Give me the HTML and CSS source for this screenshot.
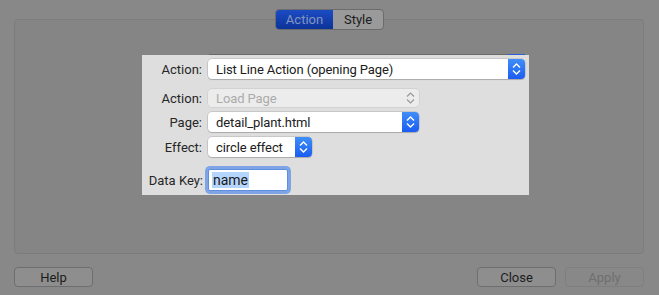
FILE: index.html
```html
<!DOCTYPE html>
<html lang="en">
<head>
  <meta charset="UTF-8">
  <title>Action Inspector</title>
  <link rel="stylesheet" href="styles.css">
</head>
<body>
  <div class="window">
    <div class="tabs">
      <div class="segmented">
        <span class="segment active">Action</span>
        <span class="segment">Style</span>
      </div>
    </div>

    <div class="panel"></div>

    <div class="footer">
      <button class="btn">Help</button>
      <div class="footer-right">
        <button class="btn">Close</button>
        <button class="btn disabled">Apply</button>
      </div>
    </div>

    <div class="popover">
      <div class="peek"><span class="peek-blue"></span></div>
      <div class="form">
        <label class="label">Action:</label>
        <div class="select wide">
          <span class="select-text">List Line Action (opening Page)</span>
          <span class="stepper"><svg width="17" height="20" viewBox="0 0 17 20"><path d="M5 8.5 L8.5 5 L12 8.5 M5 11.5 L8.5 15 L12 11.5" fill="none" stroke="#fff" stroke-width="1.4"/></svg></span>
        </div>

        <label class="label gap-top">Action:</label>
        <div class="select medium disabled gap-top">
          <span class="select-text">Load Page</span>
          <span class="stepper"><svg width="17" height="18" viewBox="0 0 17 18"><path d="M5 7.5 L8.5 4 L12 7.5 M5 10.5 L8.5 14 L12 10.5" fill="none" stroke="#999" stroke-width="1.2"/></svg></span>
        </div>

        <label class="label">Page:</label>
        <div class="select medium">
          <span class="select-text">detail_plant.html</span>
          <span class="stepper"><svg width="17" height="20" viewBox="0 0 17 20"><path d="M5 8.5 L8.5 5 L12 8.5 M5 11.5 L8.5 15 L12 11.5" fill="none" stroke="#fff" stroke-width="1.4"/></svg></span>
        </div>

        <label class="label">Effect:</label>
        <div class="select narrow">
          <span class="select-text">circle effect</span>
          <span class="stepper"><svg width="17" height="20" viewBox="0 0 17 20"><path d="M5 8.5 L8.5 5 L12 8.5 M5 11.5 L8.5 15 L12 11.5" fill="none" stroke="#fff" stroke-width="1.4"/></svg></span>
        </div>

        <label class="label key">Data Key:</label>
        <div class="field key"><span class="selected">name</span></div>
      </div>
    </div>
  </div>
</body>
</html>
```

FILE: styles.css
```css
* {
  margin: 0;
  padding: 0;
  box-sizing: border-box;
}

body {
  width: 659px;
  height: 295px;
  background-color: #888888;
  font-family: 'Roboto', 'Liberation Sans', sans-serif;
  font-size: 13px;
  color: #1e1e1e;
  overflow: hidden;
}

.window {
  position: relative;
  height: 295px;
  display: flex;
  flex-direction: column;
  padding: 9px 15px 0 14px;
}

.tabs {
  display: flex;
  justify-content: center;
  margin-bottom: -11px;
  padding-left: 1px;
  position: relative;
  z-index: 2;
}

.segmented {
  display: flex;
  height: 21px;
  border: 1px solid #6c6c6c;
  border-radius: 4px;
  overflow: hidden;
  background-color: #9a9a9a;
}

.segment {
  display: flex;
  align-items: center;
  justify-content: center;
  font-size: 13px;
  color: #1c1c1c;
  width: 50px;
}

.segment.active {
  width: 57px;
  color: #8594c2;
  background: linear-gradient(#1c4cc4, #0b3398);
}

.panel {
  height: 235px;
  background-color: #858585;
  border: 1px solid #7c7c7c;
  border-radius: 4px;
}

.footer {
  display: flex;
  justify-content: space-between;
  margin-top: 13px;
}

.footer-right {
  display: flex;
  gap: 9px;
}

.btn {
  width: 79px;
  height: 20px;
  font-family: inherit;
  font-size: 13px;
  color: #1c1c1c;
  background-color: #8e8e8e;
  border: 1px solid #6e6e6e;
  border-radius: 4px;
}

.btn.disabled {
  color: #6f6f6f;
  border-color: #7f7f7f;
  background-color: #888888;
}

.popover {
  position: absolute;
  left: 142px;
  top: 55px;
  width: 387px;
  height: 140px;
  background-color: #dedede;
  padding: 4px 0 0 7px;
}

.peek {
  position: absolute;
  top: -1px;
  left: 67px;
  width: 316px;
  height: 1px;
  background-color: #6a6a6a;
}

.peek-blue {
  position: absolute;
  right: 0;
  top: 0;
  width: 17px;
  height: 1px;
  background-color: #2b5fd9;
}

.form {
  display: grid;
  grid-template-columns: 53px auto;
  column-gap: 6px;
  row-gap: 5px;
  align-items: center;
  justify-items: start;
}

.label {
  justify-self: end;
  white-space: nowrap;
  color: #262626;
  font-size: 13px;
}

.gap-top {
  margin-top: 5px;
}

.select {
  display: flex;
  align-items: center;
  height: 20px;
  background-color: #ffffff;
  border-radius: 4px;
  box-shadow: 0 0 0 0.5px rgba(0, 0, 0, 0.2), 0 1px 1px rgba(0, 0, 0, 0.15);
  overflow: hidden;
}

.select-text {
  flex: 1;
  padding-left: 8px;
  white-space: nowrap;
  color: #202020;
  letter-spacing: -0.1px;
}

.stepper {
  width: 17px;
  height: 100%;
  display: flex;
  background: linear-gradient(#3f8ef8, #1b5cf2);
}

.wide {
  width: 317px;
}

.medium {
  width: 211px;
}

.narrow {
  width: 104px;
}

.select.disabled {
  height: 18px;
  background-color: #ececec;
  box-shadow: 0 0 0 0.5px rgba(0, 0, 0, 0.1);
}

.select.disabled .select-text {
  color: #ababab;
}

.select.disabled .stepper {
  background: none;
}

.label.key {
  margin-top: 7px;
  margin-right: -1px;
}

.field.key {
  margin-top: 7px;
  width: 80px;
  height: 22px;
  background-color: #ffffff;
  border: 1px solid #5d8ee0;
  box-shadow: 0 0 0 3px #7ea4e6;
  border-radius: 2px;
  padding: 2px 0 0 3px;
  font-size: 14px;
}

.selected {
  background-color: #b4d5fe;
  color: #1a1a1a;
  padding: 0 1px;
}
```
